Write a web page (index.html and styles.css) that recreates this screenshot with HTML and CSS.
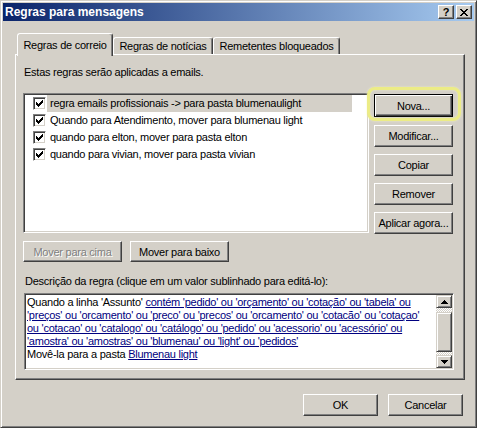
FILE: index.html
```
<!DOCTYPE html>
<html lang="pt-BR">
<head>
<meta charset="utf-8">
<title>Regras para mensagens</title>
<link rel="stylesheet" href="styles.css">
</head>
<body>
<div class="window">
  <div class="titlebar">
    <span class="title">Regras para mensagens</span>
    <div class="capbtns">
      <button class="cap help">?</button>
      <button class="cap close"><svg width="8" height="7" viewBox="0 0 8 7" shape-rendering="crispEdges"><path fill="#000" d="M0 0h2v1h-2zM6 0h2v1h-2zM1 1h2v1h-2zM5 1h2v1h-2zM2 2h4v1h-4zM3 3h2v1h-2zM2 4h4v1h-4zM1 5h2v1h-2zM5 5h2v1h-2zM0 6h2v1h-2zM6 6h2v1h-2z"/></svg></button>
    </div>
  </div>
  <div class="client">
    <div class="tabs">
      <div class="tab active t1">Regras de correio</div>
      <div class="tab t2">Regras de notícias</div>
      <div class="tab t3">Remetentes bloqueados</div>
    </div>
    <div class="panel">
      <div class="intro">Estas regras serão aplicadas a emails.</div>
      <div class="rules-row">
        <div class="listbox">
          <div class="row">
            <span class="cb"><svg width="11" height="11" viewBox="0 0 11 11" shape-rendering="crispEdges"><path fill="#000" d="M8 2h1v1h-1zM7 3h2v1h-2zM2 4h1v1h-1zM6 4h3v1h-3zM2 5h2v1h-2zM5 5h3v1h-3zM2 6h5v1h-5zM3 7h3v1h-3zM4 8h1v1h-1z"/></svg></span>
            <span class="lbl sel">regra emails profissionais -&gt; para pasta blumenaulight</span>
          </div>
          <div class="row">
            <span class="cb"><svg width="11" height="11" viewBox="0 0 11 11" shape-rendering="crispEdges"><path fill="#000" d="M8 2h1v1h-1zM7 3h2v1h-2zM2 4h1v1h-1zM6 4h3v1h-3zM2 5h2v1h-2zM5 5h3v1h-3zM2 6h5v1h-5zM3 7h3v1h-3zM4 8h1v1h-1z"/></svg></span>
            <span class="lbl">Quando para Atendimento, mover para blumenau light</span>
          </div>
          <div class="row">
            <span class="cb"><svg width="11" height="11" viewBox="0 0 11 11" shape-rendering="crispEdges"><path fill="#000" d="M8 2h1v1h-1zM7 3h2v1h-2zM2 4h1v1h-1zM6 4h3v1h-3zM2 5h2v1h-2zM5 5h3v1h-3zM2 6h5v1h-5zM3 7h3v1h-3zM4 8h1v1h-1z"/></svg></span>
            <span class="lbl">quando para elton, mover para pasta elton</span>
          </div>
          <div class="row">
            <span class="cb"><svg width="11" height="11" viewBox="0 0 11 11" shape-rendering="crispEdges"><path fill="#000" d="M8 2h1v1h-1zM7 3h2v1h-2zM2 4h1v1h-1zM6 4h3v1h-3zM2 5h2v1h-2zM5 5h3v1h-3zM2 6h5v1h-5zM3 7h3v1h-3zM4 8h1v1h-1z"/></svg></span>
            <span class="lbl">quando para vivian, mover para pasta vivian</span>
          </div>
        </div>
        <div class="side">
          <div class="nova-wrap">
            <button class="btn default">Nova...</button>
            <span class="highlight"></span>
          </div>
          <button class="btn">Modificar...</button>
          <button class="btn">Copiar</button>
          <button class="btn">Remover</button>
          <button class="btn">Aplicar agora...</button>
        </div>
      </div>
      <div class="move-row">
        <button class="btn move disabled">Mover para cima</button>
        <button class="btn move">Mover para baixo</button>
      </div>
      <div class="desc-label">Descrição da regra (clique em um valor sublinhado para editá-lo):</div>
      <div class="descbox">
        <div class="desc-text">Quando a linha 'Assunto' <a href="#">contém 'pedido' ou 'orçamento' ou 'cotação' ou 'tabela' ou<br>'preços' ou 'orcamento' ou 'preco' ou 'precos' ou 'orcamento' ou 'cotacão' ou 'cotaçao'<br>ou 'cotacao' ou 'catalogo' ou 'catálogo' ou 'pedido' ou 'acessorio' ou 'acessório' ou<br>'amostra' ou 'amostras' ou 'blumenau' ou 'light' ou 'pedidos'</a><br>Movê-la para a pasta <a href="#">Blumenau light</a></div>
        <div class="vscroll">
          <div class="sbtn"><svg width="7" height="4" viewBox="0 0 7 4" shape-rendering="crispEdges"><path fill="#000" d="M3 0h1v1h-1zM2 1h3v1h-3zM1 2h5v1h-5zM0 3h7v1h-7z"/></svg></div>
          <div class="track t-top"></div>
          <div class="thumb"></div>
          <div class="track t-bot"></div>
          <div class="sbtn"><svg width="7" height="4" viewBox="0 0 7 4" shape-rendering="crispEdges"><path fill="#000" d="M0 0h7v1h-7zM1 1h5v1h-5zM2 2h3v1h-3zM3 3h1v1h-1z"/></svg></div>
        </div>
      </div>
    </div>
    <div class="footer">
      <button class="btn foot">OK</button>
      <button class="btn foot">Cancelar</button>
    </div>
  </div>
</div>
</body>
</html>
```
FILE: styles.css
```
* { box-sizing: border-box; }

body {
  margin: 0;
  background: #d4d0c8;
  font-family: "Liberation Sans", Arial, sans-serif;
  font-size: 11px;
  letter-spacing: -0.25px;
  color: #000;
}

.window {
  width: 477px;
  height: 428px;
  border: 1px solid;
  border-color: #d4d0c8 #404040 #404040 #d4d0c8;
  box-shadow: inset 1px 1px #fff, inset -1px -1px #808080;
  padding: 2px;
  background: #d4d0c8;
  display: flex;
  flex-direction: column;
}

.titlebar {
  height: 18px;
  flex: none;
  background: linear-gradient(to right, #0a246a, #a6caf0);
  display: flex;
  align-items: center;
  justify-content: space-between;
  padding: 0 2px;
}

.title {
  color: #fff;
  font-weight: bold;
  font-size: 12px;
  letter-spacing: 0;
  line-height: 18px;
}

.capbtns { display: flex; gap: 2px; }

.cap {
  width: 16px;
  height: 14px;
  padding: 0;
  margin: 0;
  background: #d4d0c8;
  border: 1px solid;
  border-color: #fff #404040 #404040 #fff;
  box-shadow: inset -1px -1px #808080;
  display: flex;
  align-items: center;
  justify-content: center;
  font-family: "Liberation Sans", Arial, sans-serif;
  font-weight: bold;
  font-size: 11px;
  line-height: 11px;
  color: #000;
}

.client {
  padding: 12px 9px 0 12px;
  display: flex;
  flex-direction: column;
}

.tabs {
  display: flex;
  align-items: flex-end;
  height: 21px;
  padding-left: 2px;
}

.tab {
  height: 17px;
  border: 1px solid;
  border-bottom: none;
  border-color: #fff #404040 transparent #fff;
  box-shadow: inset -1px 0 #808080;
  border-radius: 3px 3px 0 0;
  padding-top: 2px;
  line-height: 13px;
  text-align: center;
  background: #d4d0c8;
}

.tab.active {
  height: 23px;
  margin-bottom: -2px;
  padding-top: 5px;
  position: relative;
  z-index: 1;
}

.t1 { width: 96px; }
.t2 { width: 100px; }
.t3 { width: 127px; }

.panel {
  width: 450px;
  height: 326px;
  border: 1px solid;
  border-color: #fff #404040 #404040 #fff;
  box-shadow: inset -1px -1px #808080;
  padding: 11px 10px 0 7px;
  display: flex;
  flex-direction: column;
}

.intro {
  line-height: 13px;
  margin-left: 1px;
}

.rules-row {
  display: flex;
  align-items: flex-start;
  gap: 5px;
  margin-top: 14px;
}

.listbox {
  width: 346px;
  height: 140px;
  background: #fff;
  border: 1px solid;
  border-color: #808080 #fff #fff #808080;
  box-shadow: inset 1px 1px #404040, inset -1px -1px #d4d0c8;
  padding: 1px;
}

.row {
  height: 17px;
  display: flex;
  align-items: center;
  padding-left: 8px;
  white-space: nowrap;
}

.cb {
  width: 13px;
  height: 13px;
  flex: none;
  background: #fff;
  border: 1px solid;
  border-color: #808080 #fff #fff #808080;
  box-shadow: inset 1px 1px #404040, inset -1px -1px #d4d0c8;
}

.cb svg { display: block; }

.lbl {
  margin-left: 1px;
  padding-left: 3px;
  line-height: 17px;
  width: 305px;
}

.lbl.sel { background: #d4d0c8; }

.side {
  width: 79px;
  display: flex;
  flex-direction: column;
  gap: 7px;
}

.btn {
  height: 22px;
  padding: 0;
  margin: 0;
  background: #d4d0c8;
  border: 1px solid;
  border-color: #fff #404040 #404040 #fff;
  box-shadow: inset -1px -1px #808080;
  font-family: "Liberation Sans", Arial, sans-serif;
  font-size: 11px;
  letter-spacing: -0.25px;
  color: #000;
  text-align: center;
}

.side .btn { width: 79px; }

.nova-wrap {
  position: relative;
  margin-top: 1px;
  margin-bottom: 1px;
}

.btn.default {
  height: 23px;
  width: 79px;
  display: block;
  border: 1px solid #000;
  box-shadow: inset 1px 1px #fff, inset -1px -1px #404040, inset -2px -2px #808080;
}

.highlight {
  position: absolute;
  left: -7px;
  top: -7px;
  right: -8px;
  bottom: -4px;
  border: 3px solid #ecec86;
  border-radius: 8px;
  box-shadow: 0 0 2px #f4f4c0, inset 0 0 2px #f4f4c0;
  pointer-events: none;
}

.move-row {
  display: flex;
  gap: 8px;
  margin-top: 7px;
}

.btn.move {
  width: 99px;
  height: 21px;
}

.btn.disabled {
  color: #808080;
  text-shadow: 1px 1px #fff;
}

.desc-label {
  margin-top: 13px;
  margin-left: 2px;
  line-height: 13px;
}

.descbox {
  margin-top: 5px;
  margin-left: 1px;
  width: 430px;
  height: 77px;
  background: #fff;
  border: 1px solid;
  border-color: #808080 #fff #fff #808080;
  box-shadow: inset 1px 1px #404040, inset -1px -1px #d4d0c8;
  padding: 1px;
  display: flex;
}

.desc-text {
  flex: 1;
  padding: 1px 0 0 1px;
  line-height: 13px;
  white-space: nowrap;
  overflow: hidden;
}

.desc-text a {
  color: #000080;
  text-decoration: underline;
}

.vscroll {
  width: 16px;
  flex: none;
  display: flex;
  flex-direction: column;
}

.sbtn {
  height: 13px;
  background: #d4d0c8;
  border: 1px solid;
  border-color: #d4d0c8 #404040 #404040 #d4d0c8;
  box-shadow: inset 1px 1px #fff, inset -1px -1px #808080;
  display: flex;
  align-items: center;
  justify-content: center;
}

.sbtn svg { display: block; }

.track {
  background-color: #d4d0c8;
  background-image: conic-gradient(#fff 25%, #d4d0c8 0 50%, #fff 0 75%, #d4d0c8 0);
  background-size: 2px 2px;
}

.t-top { height: 4px; }
.t-bot { height: 3px; }

.thumb {
  height: 40px;
  background: #d4d0c8;
  border: 1px solid;
  border-color: #d4d0c8 #404040 #404040 #d4d0c8;
  box-shadow: inset 1px 1px #fff, inset -1px -1px #808080;
}

.footer {
  width: 450px;
  display: flex;
  justify-content: flex-end;
  gap: 10px;
  padding-right: 2px;
  margin-top: 14px;
}

.btn.foot { width: 75px; }
```
